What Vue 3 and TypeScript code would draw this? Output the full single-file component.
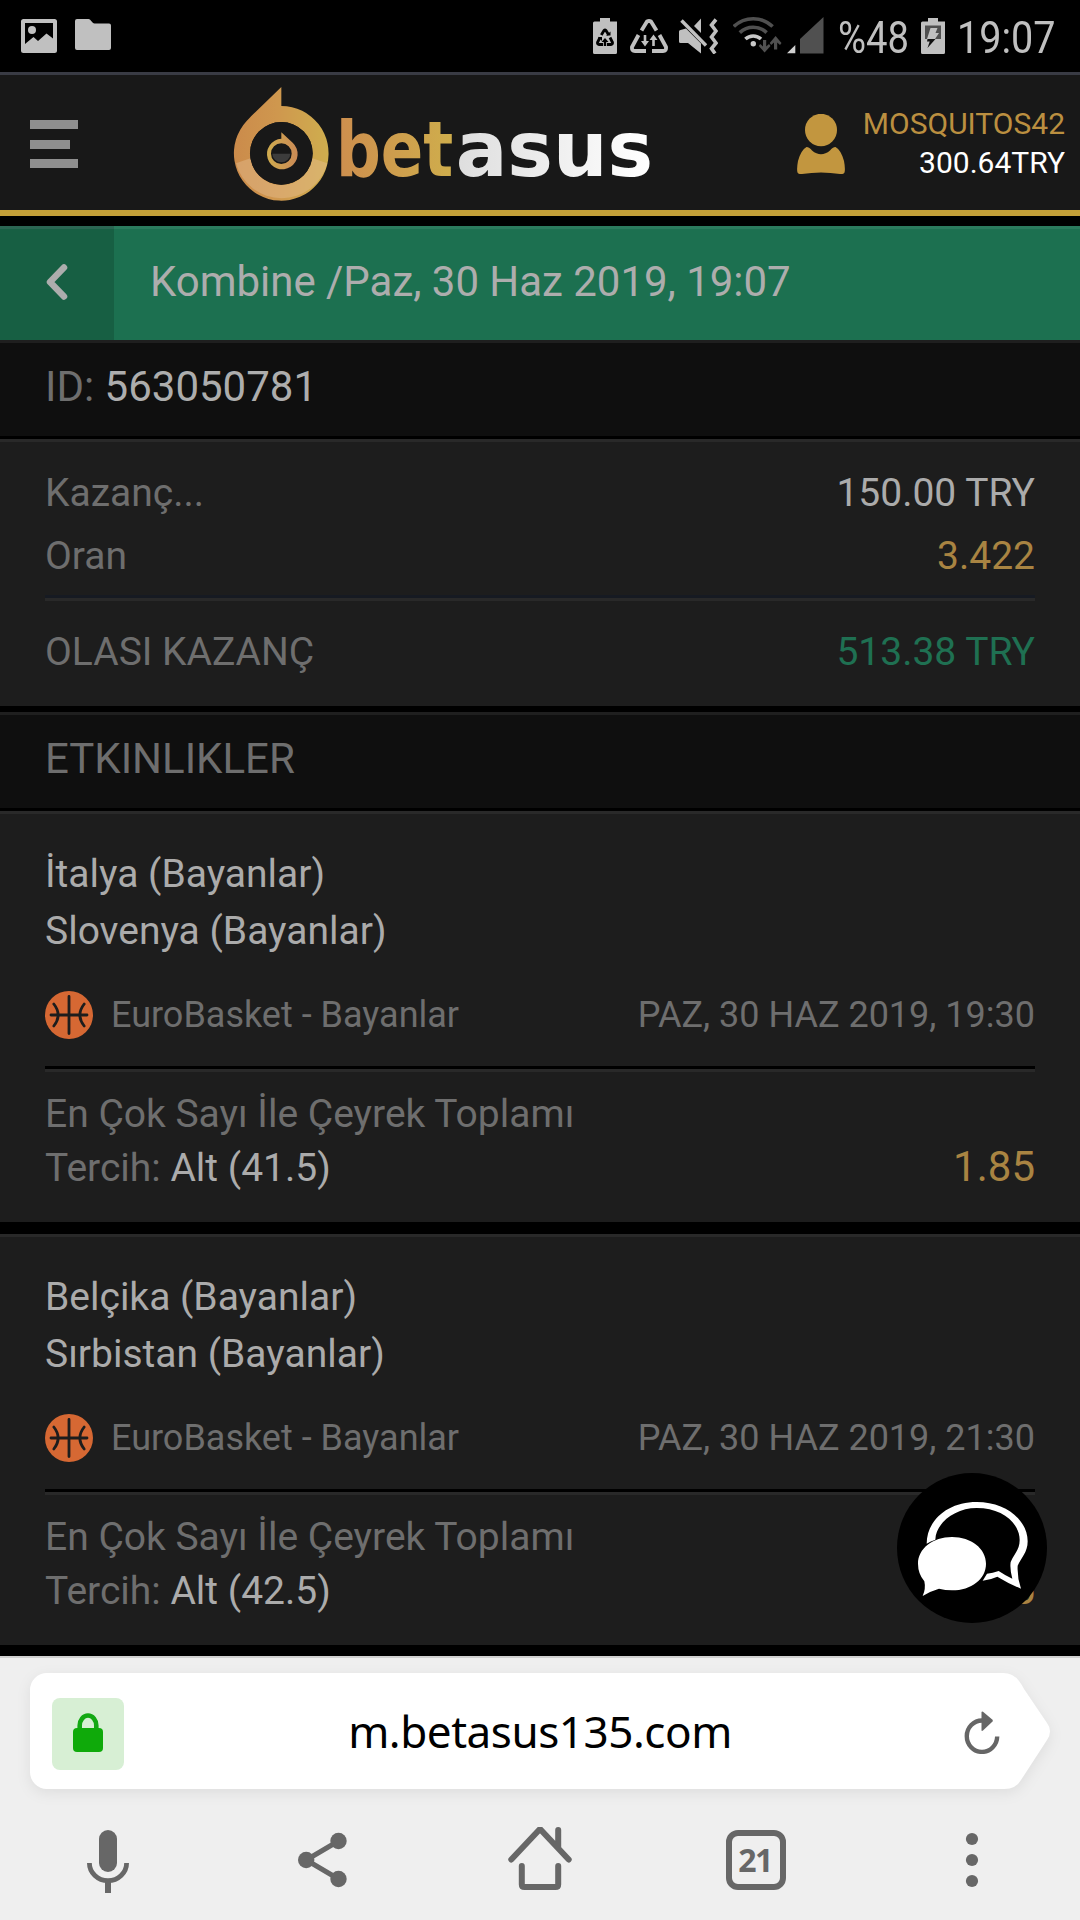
<script setup lang="ts">
interface BetEvent {
  home: string
  away: string
  league: string
  date: string
  market: string
  pick: string
  odds: string
}

const user = { name: 'MOSQUITOS42', balance: '300.64TRY' }

const coupon = {
  title: 'Kombine /Paz, 30 Haz 2019, 19:07',
  id: '563050781',
  stake: '150.00 TRY',
  odds: '3.422',
  win: '513.38 TRY',
}

const events: BetEvent[] = [
  {
    home: 'İtalya (Bayanlar)',
    away: 'Slovenya (Bayanlar)',
    league: 'EuroBasket - Bayanlar',
    date: 'PAZ, 30 HAZ 2019, 19:30',
    market: 'En Çok Sayı İle Çeyrek Toplamı',
    pick: 'Alt (41.5)',
    odds: '1.85',
  },
  {
    home: 'Belçika (Bayanlar)',
    away: 'Sırbistan (Bayanlar)',
    league: 'EuroBasket - Bayanlar',
    date: 'PAZ, 30 HAZ 2019, 21:30',
    market: 'En Çok Sayı İle Çeyrek Toplamı',
    pick: 'Alt (42.5)',
    odds: '1.85',
  },
]
</script>

<template>
  <div class="screen">
    <div class="status">
      <div class="status-left">
        <svg width="36" height="34" viewBox="0 0 36 34">
          <path fill="#c0c0c0" fill-rule="evenodd" d="M2.500 0H33.500A2.500 2.500 0 0 1 36 2.500V31.500A2.500 2.500 0 0 1 33.500 34H2.500A2.500 2.500 0 0 1 0 31.500V2.500A2.500 2.500 0 0 1 2.500 0ZM4 4V25L12.500 18L17 22L25.500 14.500L32 19.500V4Z" />
          <circle cx="11" cy="11" r="4" fill="#c0c0c0" />
        </svg>
        <svg width="36" height="31" viewBox="0 0 36 31">
          <path fill="#c0c0c0" d="M2 0H13.500C16 0 17 4.500 19.500 4.500H34A2 2 0 0 1 36 6.500V29A2 2 0 0 1 34 31H2A2 2 0 0 1 0 29V2A2 2 0 0 1 2 0Z" />
        </svg>
      </div>
      <div class="status-right">
        <svg class="ic-bat1" width="24" height="36" viewBox="593 18 24 36">
          <path fill="#c0c0c0" d="M600 18H610V21.500H617V52.500Q617 54 615.500 54H594.500Q593 54 593 52.500V23Q593 21.500 594.500 21.500H600Z" />
          <g fill="none" stroke="#000" stroke-width="2.800" stroke-linejoin="round">
            <path d="M601.300 35L604 30.500Q605 29.500 606 30.500L608.700 35" />
            <path d="M600 37.500L597.500 42.500Q597.300 44.500 599 44.500H603" />
            <path d="M610 37.500L612.500 42.500Q612.700 44.500 611 44.500H607" />
          </g>
          <path fill="#000" d="M605 38L608.500 42H606.200V46H603.800V42H601.500ZM598 37H602V41ZM606 35.500H610.500V31.500Z" />
        </svg>
        <svg class="ic-tri" width="38" height="34" viewBox="630 19 38 34">
          <g fill="none" stroke="#c0c0c0" stroke-width="3.800" stroke-linejoin="round">
            <path d="M641.500 30.500L647 21.500Q649 20.500 651 21.500L656.500 30.500" />
            <path d="M638.500 35L632 47Q631.500 51 635 51H646" />
            <path d="M659.500 35L666 47Q666.500 51 663 51H652" />
          </g>
          <path fill="#c0c0c0" d="M643.700 35H646.300V41H649L645 46.500L641 41H643.700ZM652.200 46H654.800V40H657.500L653.500 34.500L649.500 40H652.200Z" />
        </svg>
        <svg class="ic-mute" width="39" height="36" viewBox="679 18 39 36">
          <g fill="#c0c0c0">
            <path d="M679 31.500Q679 30 680.500 30L686 28.500L701 43.500V53.500L688 43H680.500Q679 43 679 41.500Z" />
            <path d="M694 26L701 18.500V33Z" />
          </g>
          <path d="M681.500 20.500L706 45.500" stroke="#c0c0c0" stroke-width="3.400" />
          <path d="M716 19.500L711.500 25L716 31L711.500 37L716 43L711.500 48.500L715 53.500" fill="none" stroke="#c0c0c0" stroke-width="3.600" />
        </svg>
        <svg class="ic-wifi" width="49" height="37" viewBox="733 16 49 37">
          <g fill="none" stroke="#505050" stroke-width="3.600">
            <path d="M733.800 26.500A28 28 0 0 1 772.600 26.500" />
            <path d="M739.800 32.600A19.500 19.500 0 0 1 766.600 32.600" />
            <path d="M745.400 39A11.500 11.500 0 0 1 761 39" stroke="#c8c8c8" />
          </g>
          <circle cx="753.300" cy="43.700" r="2.700" fill="#c8c8c8" />
          <path fill="#505050" d="M763 40H766.200V46.500L769 44L770.500 46L764.600 52.500L758.700 46L760.200 44L763 46.500ZM774 49.500H777.200V42.500L780 45L781.500 43L775.600 36L769.700 43L771.200 45L774 42.500Z" />
        </svg>
        <svg class="ic-sig" width="37" height="37" viewBox="787 17 37 37">
          <path fill="#505050" d="M800 53.500V39L823.500 17V53.500Z" />
          <path fill="#d0d0d0" d="M787 53.300L795.300 45V53.300Z" />
        </svg>
        <span class="stat-text pct">%48</span>
        <svg class="ic-bat2" width="24" height="36" viewBox="921 18 24 36">
          <path fill="#c0c0c0" d="M928 18H938V21.500H945V52.500Q945 54 943.500 54H922.500Q921 54 921 52.500V23Q921 21.500 922.500 21.500H928Z" />
          <rect x="925" y="25.500" width="16" height="13.500" fill="#505050" />
          <path fill="#c0c0c0" d="M930.500 28H937.500L935.500 33H939L935 39H927Z" />
          <path fill="#111" d="M927.500 39H935.500L927.500 48L929.700 41.500H927Z" />
        </svg>
        <span class="stat-text clock">19:07</span>
      </div>
    </div>

    <header class="header">
      <div class="burger"><i></i><i></i><i></i></div>
      <svg class="logo" width="440" height="135" viewBox="0 0 1320 405">
        <defs>
          <linearGradient id="gold" gradientUnits="userSpaceOnUse" x1="43" y1="0" x2="326" y2="0">
            <stop offset="0" stop-color="#cb8b4b" />
            <stop offset=".45" stop-color="#cf974e" />
            <stop offset="1" stop-color="#cfae4e" />
          </linearGradient>
          <linearGradient id="goldSmall" gradientUnits="userSpaceOnUse" x1="138" y1="0" x2="230" y2="0">
            <stop offset="0" stop-color="#d0ad4e" />
            <stop offset="1" stop-color="#cb8b55" />
          </linearGradient>
          <linearGradient id="goldText" gradientUnits="userSpaceOnUse" x1="363" y1="0" x2="705" y2="0">
            <stop offset="0" stop-color="#cd8f4e" />
            <stop offset="1" stop-color="#cfae4c" />
          </linearGradient>
          <linearGradient id="silver" gradientUnits="userSpaceOnUse" x1="713" y1="0" x2="1290" y2="0">
            <stop offset="0" stop-color="#dedede" />
            <stop offset="1" stop-color="#ffffff" />
          </linearGradient>
        </defs>
        <path fill="url(#gold)" fill-rule="evenodd" d="M184 36V93A142 142 0 1 1 80 138Q88 130 94 123ZM184 141A94 94 0 1 0 184 329A94 94 0 1 0 184 141Z" />
        <path fill="#e4bc90" fill-opacity=".45" d="M48 265L91 250A94 94 0 0 0 277 250L322 265A142 142 0 0 1 48 265Z" />
        <circle cx="184" cy="235" r="94" fill="#181818" />
        <path fill="url(#goldSmall)" fill-rule="evenodd" d="M184 172L218 203A46 46 0 1 1 184 191ZM184 205A31 31 0 1 0 184 267A31 31 0 1 0 184 205Z" />
        <path fill="#3c3c3c" d="M157 236H211A27 26 0 0 1 157 236Z" />
        <text x="348" y="304" class="wordmark" fill="url(#goldText)" textLength="352" lengthAdjust="spacingAndGlyphs">bet</text>
        <text x="707" y="304" class="wordmark" fill="url(#silver)" textLength="592" lengthAdjust="spacingAndGlyphs">asus</text>
      </svg>
      <div class="account">
        <svg width="48" height="60" viewBox="0 0 48 60">
          <ellipse cx="24" cy="16" rx="16" ry="16.200" fill="#c2963f" />
          <path fill="#c2963f" d="M9.500 33Q12.500 33 15 36.500Q24 44 33 36.500Q35.500 33 38.500 33Q44 36 47 47Q48.500 55 47.500 58.500Q46.500 60.500 43 60Q24 57 5 60Q1.500 60.500 .5 58.500Q-.5 55 1 47Q4 36 9.500 33Z" />
        </svg>
        <div class="account-text">
          <span class="name">{{ user.name }}</span>
          <span class="balance">{{ user.balance }}</span>
        </div>
      </div>
    </header>

    <div class="titlebar">
      <div class="back">
        <svg width="22" height="36" viewBox="0 0 22 36">
          <path d="M18 3.500L4 18L18 32.500" fill="none" stroke="#adadad" stroke-width="6.500" stroke-linecap="round" stroke-linejoin="round" />
        </svg>
      </div>
      <div class="title">{{ coupon.title }}</div>
    </div>

    <div class="strip first">ID:&nbsp;<b>{{ coupon.id }}</b></div>

    <section class="panel summary">
      <div class="row"><span>Kazanç...</span><span class="light">{{ coupon.stake }}</span></div>
      <div class="row"><span>Oran</span><span class="gold">{{ coupon.odds }}</span></div>
      <div class="rule blue"></div>
      <div class="row total"><span>OLASI KAZANÇ</span><span class="green">{{ coupon.win }}</span></div>
    </section>

    <div class="strip second">ETKINLIKLER</div>

    <section v-for="(ev, i) in events" :key="i" class="panel event">
      <div class="team">{{ ev.home }}</div>
      <div class="team">{{ ev.away }}</div>
      <div class="league">
        <svg width="48" height="48" viewBox="0 0 48 48">
          <circle cx="24" cy="24" r="24" fill="#d66833" />
          <g fill="none" stroke="#1d1d1d" stroke-width="2.800" stroke-linecap="round">
            <path d="M24 5.500V42.500M6 24H42M8.800 13Q17.500 24 8.800 35M39.200 13Q30.500 24 39.200 35" />
          </g>
        </svg>
        <span class="league-name">{{ ev.league }}</span>
        <span class="date">{{ ev.date }}</span>
      </div>
      <div class="rule"></div>
      <div class="bet">
        <div class="bet-text">
          <div>{{ ev.market }}</div>
          <div>Tercih: <span class="light">{{ ev.pick }}</span></div>
        </div>
        <div class="bet-odds">{{ ev.odds }}</div>
      </div>
    </section>

    <div class="chat">
      <svg width="150" height="150" viewBox="351 219 450 450">
        <circle cx="576" cy="444" r="225" fill="#000" />
        <path fill="#fff" d="M516 411C574 411 618 446 618 491C618 537 574 571 516 571Q496 571 477 566Q452 573 428 588Q438 566 433 544Q414 521 414 491C414 446 458 411 516 411Z" />
        <path fill="#fff" d="M440 431C440 362 502 306 590 306C680 306 743 362 743 424C743 457 724 473 713 497Q711 532 723 566Q690 553 652 530Q630 540 608 542L621 521Q638 519 656 513Q675 526 697 536Q689 506 692 486C702 462 719 450 719 420C719 370 668 324 590 324C524 324 467 370 466 419Q452 423 440 431Z" />
      </svg>
    </div>

    <footer class="browser">
      <div class="omnibox">
        <svg class="omnibox-shape" width="1020" height="116" viewBox="0 0 1020 116">
          <path fill="#fff" d="M17 0H973Q983 0 989 8Q992 12 994 16L1017 50Q1023 58 1017 67L991 107Q986 116 974 116H17A17 17 0 0 1 0 99V17A17 17 0 0 1 17 0Z" />
        </svg>
        <div class="omnibox-row">
          <div class="lock">
            <svg width="30" height="39" viewBox="0 0 30 39">
              <path d="M6.700 18V12.500A8.300 10 0 0 1 23.300 12.500V18" fill="none" stroke="#13a813" stroke-width="4.600" />
              <rect y="15" width="30" height="24" rx="4" fill="#0faa0a" />
            </svg>
          </div>
          <div class="url">m.betasus135.com</div>
          <svg class="reload" width="36" height="43" viewBox="0 0 36 43">
            <path d="M18 9.500A15.200 15.700 0 1 0 33.200 25.500" fill="none" stroke="#666" stroke-width="4.400" />
            <path d="M17.500 1Q18 0 19 .8L28.500 8.800Q29.200 9.700 28.500 10.500L19 19.500Q17.500 20.500 17.500 19Z" fill="#666" />
          </svg>
        </div>
      </div>
      <nav class="nav">
        <div>
          <svg width="66" height="66" viewBox="-33 -33 66 66">
            <rect x="-9" y="-30" width="18" height="42" rx="9" fill="#676767" />
            <path d="M-18.600 3A18.600 17.700 0 0 0 18.600 3" fill="none" stroke="#676767" stroke-width="4.800" />
            <path d="M0 21V33" stroke="#676767" stroke-width="6" />
          </svg>
        </div>
        <div>
          <svg width="66" height="66" viewBox="-33 -33 66 66">
            <path d="M14.500 -19L-17.800 0L14.500 19" fill="none" stroke="#676767" stroke-width="5" />
            <g fill="#676767"><circle cx="14.500" cy="-19" r="8.200" /><circle cx="-17.800" cy="0" r="8.200" /><circle cx="14.500" cy="19" r="8.200" /></g>
          </svg>
        </div>
        <div>
          <svg width="66" height="66" viewBox="-33 -33 66 66">
            <g fill="none" stroke="#676767" stroke-width="6" stroke-linecap="round">
              <path d="M-28.700 -.5L0 -31L28.700 -.5M18.200 -30V-12" />
              <path d="M-18.200 6V24.500Q-18.200 27 -15.500 27H15.500Q18.200 27 18.200 24.500V6" />
            </g>
          </svg>
        </div>
        <div><span class="tabs">21</span></div>
        <div>
          <svg width="66" height="66" viewBox="-33 -33 66 66">
            <g fill="#676767"><circle cy="-21" r="6.100" /><circle cy="0" r="6.100" /><circle cy="21" r="6.100" /></g>
          </svg>
        </div>
      </nav>
    </footer>
  </div>
</template>

<style>
body {
  margin: 0;
  background: #000;
}
</style>

<style scoped>
.screen {
  position: relative;
  width: 1080px;
  height: 1920px;
  display: flex;
  flex-direction: column;
  overflow: hidden;
  background: #000;
  color: #6e6e6e;
  font-family: Roboto, sans-serif;
  font-size: 39px;
}
.screen * {
  box-sizing: border-box;
}
svg {
  display: block;
  flex: none;
}
.status {
  height: 75px;
  border-bottom: 3px solid #393b44;
  display: flex;
  justify-content: space-between;
  padding-left: 21px;
}
.status-left {
  display: flex;
  align-items: flex-start;
  gap: 18px;
  padding-top: 19px;
}
.status-right {
  display: flex;
  align-items: flex-start;
  width: 487px;
  padding-top: 16px;
}
.ic-bat1 { margin-top: 2px; }
.ic-tri { margin: 3px 0 0 13px; }
.ic-mute { margin: 2px 0 0 11px; }
.ic-wifi { margin-left: 15px; }
.ic-sig { margin: 1px 0 0 5px; }
.ic-bat2 { margin-top: 2px; }
.stat-text {
  color: #c0c0c0;
  font-size: 45px;
  line-height: 43px;
  white-space: nowrap;
  transform-origin: left center;
}
.pct {
  width: 83px;
  margin: 0 0 0 14px;
  transform: scaleX(.85);
}
.clock {
  width: 120px;
  margin-left: 12px;
  transform: scaleX(.88);
}
.header {
  height: 141px;
  background: #181818;
  border-bottom: 6px solid #c4a038;
  display: flex;
  align-items: flex-start;
}
.burger {
  width: 48px;
  margin: 45px 0 0 30px;
  display: flex;
  flex-direction: column;
  gap: 10.500px;
}
.burger i {
  height: 9px;
  background: #8f8f8f;
}
.burger i:nth-child(2) {
  width: 40px;
}
.logo {
  margin-left: 142px;
}
.wordmark {
  font-family: "DejaVu Sans", sans-serif;
  font-weight: 700;
  font-size: 228px;
}
.account {
  margin-left: auto;
  padding-right: 15px;
  display: flex;
}
.account > svg {
  margin: 39px 18px 0 0;
}
.account-text {
  display: flex;
  flex-direction: column;
  align-items: flex-end;
  padding-top: 29px;
  font-size: 30px;
  line-height: 39px;
}
.name { color: #bb8f40; }
.balance { color: #fff; }
.titlebar {
  margin-top: 10px;
  height: 114px;
  border-top: 3px solid #2b7a5d;
  background: #1c7050;
  display: flex;
}
.back {
  width: 114px;
  background: #175f43;
  box-shadow: 0 -3px 0 #2b6552;
  padding: 35px 0 0 46px;
}
.title {
  padding-left: 36px;
  color: #adadad;
  font-size: 42px;
  line-height: 105px;
  letter-spacing: -.03px;
}
.strip {
  height: 96px;
  border-top: 3px solid #1f1f1f;
  background: #0f0f0f;
  padding-left: 45px;
  font-size: 42px;
  line-height: 87px;
}
.strip b {
  font-weight: 400;
  color: #adadad;
}
.strip.second { margin-top: 6px; }
.panel {
  margin-top: 3px;
  border-top: 3px solid #292929;
  background: #1d1d1d;
  padding: 0 45px;
}
.summary {
  height: 267px;
  padding-top: 20px;
}
.row {
  display: flex;
  justify-content: space-between;
  line-height: 63px;
}
.rule {
  height: 6px;
  background: #292929;
  border-top: 3px solid #000;
}
.rule.blue {
  margin: 7px 0 20px;
  border-top-color: #161a22;
}
.light { color: #ababab; }
.gold { color: #a98442; }
.green { color: #1f7052; }
.event {
  height: 411px;
  padding-top: 32px;
}
.event + .event { margin-top: 12px; }
.team {
  line-height: 57px;
  color: #ababab;
}
.league {
  height: 48px;
  margin: 31px 0 27px;
  display: flex;
  align-items: center;
  font-size: 36px;
}
.league-name {
  margin-left: 18px;
}
.date {
  margin-left: auto;
}
.bet {
  display: flex;
  justify-content: space-between;
  align-items: flex-end;
  padding-top: 15px;
  line-height: 54px;
}
.bet-odds {
  font-size: 42px;
  line-height: 56px;
  color: #a98442;
}
.chat {
  position: absolute;
  left: 897px;
  top: 1473px;
}
.browser {
  margin-top: 11px;
  flex: 1;
  background: #efefef;
  border-top: 2px solid #d0d0d0;
}
.omnibox {
  display: grid;
  width: 1020px;
  height: 116px;
  margin: 15px 0 0 30px;
}
.omnibox-shape,
.omnibox-row {
  grid-area: 1 / 1;
}
.omnibox-shape {
  overflow: visible;
  filter: drop-shadow(0 4px 7px rgba(0, 0, 0, .07));
}
.omnibox-row {
  z-index: 1;
  display: flex;
  padding: 25px 0 0 22px;
}
.lock {
  width: 72px;
  height: 72px;
  border-radius: 8px;
  background: #d7efd4;
  padding: 15px 0 0 21px;
}
.url {
  width: 832px;
  text-align: center;
  font-family: "Noto Sans", sans-serif;
  font-size: 44px;
  line-height: 66px;
  letter-spacing: -.45px;
  color: #000;
}
.reload {
  margin: 13px 0 0 8px;
}
.nav {
  display: grid;
  grid-template-columns: repeat(5, 216px);
  height: 66px;
  margin-top: 38px;
}
.nav > div {
  display: flex;
  justify-content: center;
  align-items: center;
}
.tabs {
  width: 60px;
  height: 60px;
  border: 6px solid #676767;
  border-radius: 12px;
  text-align: center;
  font-family: "Noto Sans", sans-serif;
  font-weight: 700;
  font-size: 32px;
  line-height: 47px;
  letter-spacing: -1.500px;
  text-indent: -2px;
  color: #676767;
}
</style>
